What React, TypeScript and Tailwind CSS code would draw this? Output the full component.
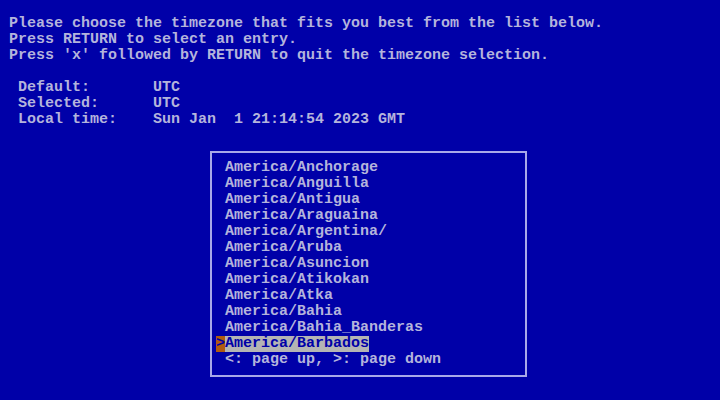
import React from "react";

const zones = [
  "America/Anchorage",
  "America/Anguilla",
  "America/Antigua",
  "America/Araguaina",
  "America/Argentina/",
  "America/Aruba",
  "America/Asuncion",
  "America/Atikokan",
  "America/Atka",
  "America/Bahia",
  "America/Bahia_Banderas",
];

function App() {
  return (
    <div
      className="w-[720px] h-[400px] overflow-hidden bg-[#0000a8] text-[#b4b4dc] text-[15px] leading-[16px] font-bold"
      style={{ fontFamily: '"Liberation Mono", "DejaVu Sans Mono", monospace' }}
    >
      <div className="pt-[16px] pl-[9px] whitespace-pre">
        <div>Please choose the timezone that fits you best from the list below.</div>
        <div>Press RETURN to select an entry.</div>
        <div>Press 'x' followed by RETURN to quit the timezone selection.</div>
        <div>&nbsp;</div>
        <div> Default:       UTC</div>
        <div> Selected:      UTC</div>
        <div> Local time:    Sun Jan  1 21:14:54 2023 GMT</div>
      </div>

      {/* zone list box */}
      <div className="mt-[23px] ml-[210px] w-[317px] h-[226px] border-2 border-[#a8a8e8] pt-[7px] pl-[4px] whitespace-pre">
        {zones.map((z) => (
          <div key={z} className="pl-[9px]">
            {z}
          </div>
        ))}
        <div className="flex">
          <span className="w-[9px] bg-[#b05a10] text-[#0000a8]">&gt;</span>
          <span className="bg-[#b4b4b4] text-[#0000a8]">America/Barbados</span>
        </div>
        <div className="pl-[9px]">&lt;: page up, &gt;: page down</div>
      </div>
    </div>
  );
}

export default App;
